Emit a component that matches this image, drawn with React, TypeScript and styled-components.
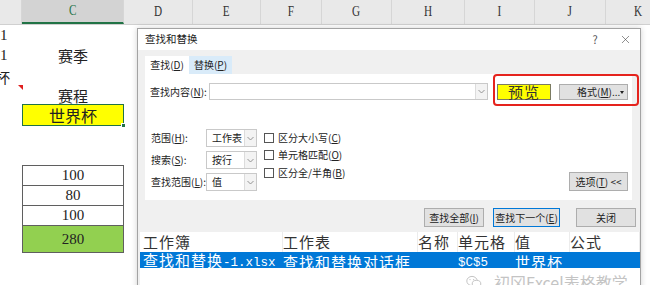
import React from 'react';
import styled, { createGlobalStyle } from 'styled-components';
import { X } from 'lucide-react';

const GlobalStyle = createGlobalStyle`
  html, body {
    margin: 0;
    padding: 0;
    background: #fff;
  }
  * {
    box-sizing: border-box;
  }
`;

const uiFont = `'Noto Sans CJK SC', 'Noto Sans', sans-serif`;
const cellFont = `'Liberation Serif', 'Noto Sans CJK SC', serif`;

const Screen = styled.div`
  position: relative;
  width: 650px;
  height: 285px;
  overflow: hidden;
  background: #fff;
`;

// ---------- sheet ----------
const ColHeaderRow = styled.div`
  display: flex;
  height: 25px;
  background: #e9e9e9;
  border-bottom: 1px solid #d0d0d0;
`;
interface IColHead {
  $w: number;
  $active?: boolean;
}
const ColHead = styled.div<IColHead>`
  flex: 0 0 ${({ $w }) => $w}px;
  display: flex;
  align-items: center;
  justify-content: center;
  font-family: ${cellFont};
  font-size: 14px;
  color: ${({ $active }) => ($active ? '#217346' : '#333')};
  background: ${({ $active }) => ($active ? '#d3d3d3' : 'transparent')};
  border-right: 1px solid #d6d6d6;
  border-bottom: ${({ $active }) => ($active ? '2px solid #217346' : 'none')};
`;
const Letter = styled.span`
  display: inline-block;
  transform: scaleX(0.8);
`;
const SheetBody = styled.div`
  display: grid;
  grid-template-columns: 22px 102px;
`;
interface IRow {
  $h: number;
}
const Cell = styled.div<IRow & { $left?: boolean }>`
  position: relative;
  height: ${({ $h }) => $h}px;
  display: flex;
  align-items: center;
  justify-content: ${({ $left }) => ($left ? 'flex-start' : 'center')};
  font-family: ${cellFont};
  font-size: 15px;
  color: #222;
  white-space: nowrap;
`;
const Cut = styled.span<{ $shift: number }>`
  margin-left: ${({ $shift }) => $shift}px;
`;
const CommentMark = styled.span`
  position: absolute;
  right: -1px;
  top: -1px;
  width: 0;
  height: 0;
  border-left: 5px solid transparent;
  border-top: 5px solid #e02020;
`;
const SelectedCell = styled(Cell)`
  background: #ffff00;
  border: 1px solid #217346;
  font-size: 16px;
`;
const Handle = styled.span`
  position: absolute;
  right: -3px;
  bottom: -3px;
  width: 5px;
  height: 5px;
  background: #217346;
  border: 1px solid #fff;
`;
const TableCell = styled(Cell)<{ $green?: boolean }>`
  border: 1px solid #5f5f5f;
  margin-top: -1px;
  background: ${({ $green }) => ($green ? '#92d050' : '#fff')};
`;

// ---------- dialog ----------
const Dialog = styled.div`
  position: absolute;
  left: 137px;
  top: 28px;
  width: 504px;
  height: 270px;
  background: #f0f0f0;
  border: 1px solid #a3a3a3;
  box-shadow: 0 0 6px rgba(0, 0, 0, 0.18);
  display: flex;
  flex-direction: column;
  font-family: ${uiFont};
  font-size: 10px;
  line-height: 1.2;
  color: #222;
`;
const TitleBar = styled.div`
  height: 21px;
  flex: 0 0 21px;
  background: #fff;
  display: flex;
  align-items: center;
  padding: 0 8px 0 7px;
  font-size: 10.5px;
`;
const Title = styled.div`
  flex: 1;
`;
const Help = styled.span`
  width: 20px;
  margin-right: 14px;
  text-align: center;
  color: #555;
  font-size: 11px;
`;
const DialogBody = styled.div`
  padding: 6px 4px 0 7px;
  display: flex;
  flex-direction: column;
`;
const Tabs = styled.div`
  display: flex;
  height: 18px;
`;
const Tab = styled.div<{ $active?: boolean; $w: number }>`
  width: ${({ $w }) => $w}px;
  display: flex;
  align-items: center;
  justify-content: center;
  background: ${({ $active }) => ($active ? '#fff' : '#d9ebf9')};
`;
const Panel = styled.div`
  position: relative;
  height: 126px;
  margin-right: 4px;
  background: #fff;
  display: flex;
  flex-direction: column;
`;
const FindRow = styled.div`
  display: flex;
  align-items: center;
  height: 17px;
  margin-top: 9px;
  padding-left: 5px;
`;
const Label = styled.span<{ $w?: number }>`
  ${({ $w }) => ($w ? `width: ${$w}px;` : '')}
  white-space: nowrap;
`;
const Combo = styled.div<{ $w: number; $h: number }>`
  width: ${({ $w }) => $w}px;
  height: ${({ $h }) => $h}px;
  border: 1px solid #c9c9c9;
  background: #fff;
  display: flex;
  align-items: center;
`;
const ComboText = styled.div`
  flex: 1;
  padding-left: 5px;
  white-space: nowrap;
`;
const ComboArrow = styled.div`
  width: 12px;
  height: 100%;
  display: flex;
  align-items: center;
  justify-content: center;
  border-left: 1px solid #dcdcdc;
  background: #f3f3f3;
`;
const Highlight = styled.div`
  position: absolute;
  left: 348px;
  top: 0;
  width: 146px;
  height: 32px;
  border: 2px solid #e5231d;
  border-radius: 4px;
  padding: 8px 0 0 2px;
  display: flex;
  align-items: flex-start;
`;
const Preview = styled.div`
  width: 54px;
  height: 16px;
  background: #ffff00;
  border: 1px solid #7b7b62;
  display: flex;
  align-items: center;
  justify-content: center;
  font-family: 'Noto Sans CJK SC', serif;
  font-size: 15px;
  color: #333;
  letter-spacing: 1px;
`;
const Button = styled.div<{ $w: number; $h?: number; $default?: boolean; $gap?: number }>`
  width: ${({ $w }) => $w}px;
  height: ${({ $h }) => $h || 19}px;
  margin-left: ${({ $gap }) => $gap || 0}px;
  background: #e1e1e1;
  border: 1px solid ${({ $default }) => ($default ? '#0078d7' : '#adadad')};
  display: flex;
  align-items: center;
  justify-content: center;
  position: relative;
  white-space: nowrap;
`;
const FormatButton = styled(Button)`
  margin-left: 8px;
  justify-content: flex-start;
  padding-left: 17px;
`;
const OptionsButton = styled(Button)`
  align-self: flex-end;
  margin: 0 4px 0 auto;
`;
const Caret = styled.span`
  position: absolute;
  right: 3px;
  top: 6px;
  border-left: 2px solid transparent;
  border-right: 2px solid transparent;
  border-top: 3px solid #222;
`;
const Options = styled.div`
  display: flex;
  margin-top: 29px;
  padding-left: 6px;
`;
const OptGrid = styled.div`
  display: grid;
  grid-template-columns: 55px 51px;
  grid-auto-rows: 18px;
  row-gap: 4px;
  align-items: center;
`;
const Checks = styled.div`
  display: flex;
  flex-direction: column;
  margin-left: 7px;
`;
const CheckRow = styled.label`
  height: 17.5px;
  display: flex;
  align-items: center;
  gap: 4px;
`;
const Box = styled.span`
  width: 10px;
  height: 10px;
  border: 1px solid #555;
  background: #fff;
`;
const ButtonRow = styled.div`
  display: flex;
  justify-content: flex-end;
  margin-top: 8px;
  gap: 9px;
`;

// ---------- results ----------
const Results = styled.div`
  flex: 1;
  margin: 5px 0 0 2px;
  background: #fff;
  font-family: 'Noto Sans CJK SC', serif;
  font-size: 15px;
  line-height: 16px;
  color: #333;
`;
const cols = '140px 135px 40px 57px 55px 1fr';
const ResHead = styled.div`
  display: grid;
  grid-template-columns: ${cols};
  height: 20px;
  padding-left: 3px;
  letter-spacing: 1px;
`;
const HeadCell = styled.div`
  height: 100%;
  display: flex;
  align-items: center;
  border-right: 1px solid #ececec;
  white-space: nowrap;
`;
const ResRow = styled.div`
  display: grid;
  grid-template-columns: ${cols};
  height: 16px;
  padding-left: 3px;
  align-items: center;
  background: #0078d7;
  color: #fff;
  letter-spacing: 1px;
`;
const ResCell = styled.div`
  white-space: nowrap;
`;
const Mono = styled.span`
  font-family: 'Liberation Mono', monospace;
  font-size: 12.5px;
  letter-spacing: 0;
`;

const Watermark = styled.div`
  position: absolute;
  left: 466px;
  top: 273px;
  display: flex;
  align-items: center;
  gap: 12px;
  font-family: ${uiFont};
  font-size: 16px;
  line-height: 18px;
  color: #c4c4c4;
  white-space: nowrap;
`;

const ArrowIcon = () => (
  <svg width='7' height='5' viewBox='0 0 7 5'>
    <path d='M0.5 1 L3.5 4 L6.5 1' fill='none' stroke='#8a8a8a' strokeWidth='0.9' />
  </svg>
);

const WeChatIcon = () => (
  <svg width='16' height='14' viewBox='0 0 16 14'>
    <ellipse cx='6' cy='6' rx='5.2' ry='4.6' fill='none' stroke='#c4c4c4' strokeWidth='1' />
    <ellipse cx='10.5' cy='9' rx='4.3' ry='3.7' fill='#fff' stroke='#c4c4c4' strokeWidth='1' />
    <circle cx='4' cy='4.6' r='0.7' fill='#c4c4c4' />
    <circle cx='7.6' cy='4.6' r='0.7' fill='#c4c4c4' />
  </svg>
);

const columns = [
  { w: 22, name: '' },
  { w: 102, name: 'C', active: true },
  { w: 69, name: 'D' },
  { w: 68, name: 'E' },
  { w: 61, name: 'F' },
  { w: 70, name: 'G' },
  { w: 73, name: 'H' },
  { w: 70, name: 'I' },
  { w: 71, name: 'J' },
  { w: 66, name: 'K' },
];

const App = () => {
  return (
    <Screen>
      <GlobalStyle />
      <ColHeaderRow>
        {columns.map((c) => (
          <ColHead key={c.name || 'b'} $w={c.w} $active={c.active}>
            <Letter>{c.name}</Letter>
          </ColHead>
        ))}
      </ColHeaderRow>
      <SheetBody>
        <Cell $h={20} $left>1</Cell>
        <Cell $h={20} />
        <Cell $h={21} $left>1</Cell>
        <Cell $h={21}>赛季</Cell>
        <Cell $h={20} $left>
          <Cut $shift={-5}>杯</Cut>
        </Cell>
        <Cell $h={20} />
        <Cell $h={18}>
          <CommentMark />
        </Cell>
        <Cell $h={18}>赛程</Cell>
        <Cell $h={22} />
        <SelectedCell $h={22}>
          世界杯
          <Handle />
        </SelectedCell>
        <Cell $h={19} />
        <Cell $h={19} />
        <Cell $h={21} />
        <Cell $h={21} />
        <Cell $h={20} />
        <TableCell $h={21}>100</TableCell>
        <Cell $h={20} />
        <TableCell $h={21}>80</TableCell>
        <Cell $h={20} />
        <TableCell $h={21}>100</TableCell>
        <Cell $h={27} />
        <TableCell $h={28} $green>280</TableCell>
      </SheetBody>

      <Dialog>
        <TitleBar>
          <Title>查找和替换</Title>
          <Help>?</Help>
          <X size={13} strokeWidth={1.1} color='#444' />
        </TitleBar>
        <DialogBody>
          <Tabs>
            <Tab $active $w={44}>
              <span>
                查找(<u>D</u>)
              </span>
            </Tab>
            <Tab $w={43}>
              <span>
                替换(<u>P</u>)
              </span>
            </Tab>
          </Tabs>
          <Panel>
            <FindRow>
              <Label $w={59}>
                查找内容(<u>N</u>):
              </Label>
              <Combo $w={279} $h={17}>
                <ComboText />
                <ComboArrow>
                  <ArrowIcon />
                </ComboArrow>
              </Combo>
            </FindRow>
            <Highlight>
              <Preview>预览</Preview>
              <FormatButton $w={69} $h={16}>
                <span>
                  格式(<u>M</u>)...
                </span>
                <Caret />
              </FormatButton>
            </Highlight>
            <Options>
              <OptGrid>
                <Label>
                  范围(<u>H</u>):
                </Label>
                <Combo $w={51} $h={18}>
                  <ComboText>工作表</ComboText>
                  <ComboArrow>
                    <ArrowIcon />
                  </ComboArrow>
                </Combo>
                <Label>
                  搜索(<u>S</u>):
                </Label>
                <Combo $w={51} $h={18}>
                  <ComboText>按行</ComboText>
                  <ComboArrow>
                    <ArrowIcon />
                  </ComboArrow>
                </Combo>
                <Label>
                  查找范围(<u>L</u>):
                </Label>
                <Combo $w={51} $h={18}>
                  <ComboText>值</ComboText>
                  <ComboArrow>
                    <ArrowIcon />
                  </ComboArrow>
                </Combo>
              </OptGrid>
              <Checks>
                <CheckRow>
                  <Box />
                  <span>
                    区分大小写(<u>C</u>)
                  </span>
                </CheckRow>
                <CheckRow>
                  <Box />
                  <span>
                    单元格匹配(<u>O</u>)
                  </span>
                </CheckRow>
                <CheckRow>
                  <Box />
                  <span>
                    区分全/半角(<u>B</u>)
                  </span>
                </CheckRow>
              </Checks>
              <OptionsButton $w={59}>
                <span>
                  选项(<u>T</u>) &lt;&lt;
                </span>
              </OptionsButton>
            </Options>
          </Panel>
          <ButtonRow>
            <Button $w={60}>
              <span>
                查找全部(<u>I</u>)
              </span>
            </Button>
            <Button $w={67} $default>
              <span>
                查找下一个(<u>E</u>)
              </span>
            </Button>
            <Button $w={60} $gap={7}>
              关闭
            </Button>
          </ButtonRow>
        </DialogBody>
        <Results>
          <ResHead>
            <HeadCell>工作簿</HeadCell>
            <HeadCell>工作表</HeadCell>
            <HeadCell>名称</HeadCell>
            <HeadCell>单元格</HeadCell>
            <HeadCell>值</HeadCell>
            <HeadCell>公式</HeadCell>
          </ResHead>
          <ResRow>
            <ResCell>
              查找和替换<Mono>-1.xlsx</Mono>
            </ResCell>
            <ResCell>查找和替换对话框</ResCell>
            <ResCell />
            <ResCell>
              <Mono>$C$5</Mono>
            </ResCell>
            <ResCell>世界杯</ResCell>
            <ResCell />
          </ResRow>
        </Results>
      </Dialog>

      <Watermark>
        <WeChatIcon />
        初冈Excel表格教学
      </Watermark>
    </Screen>
  );
};

export default App;
